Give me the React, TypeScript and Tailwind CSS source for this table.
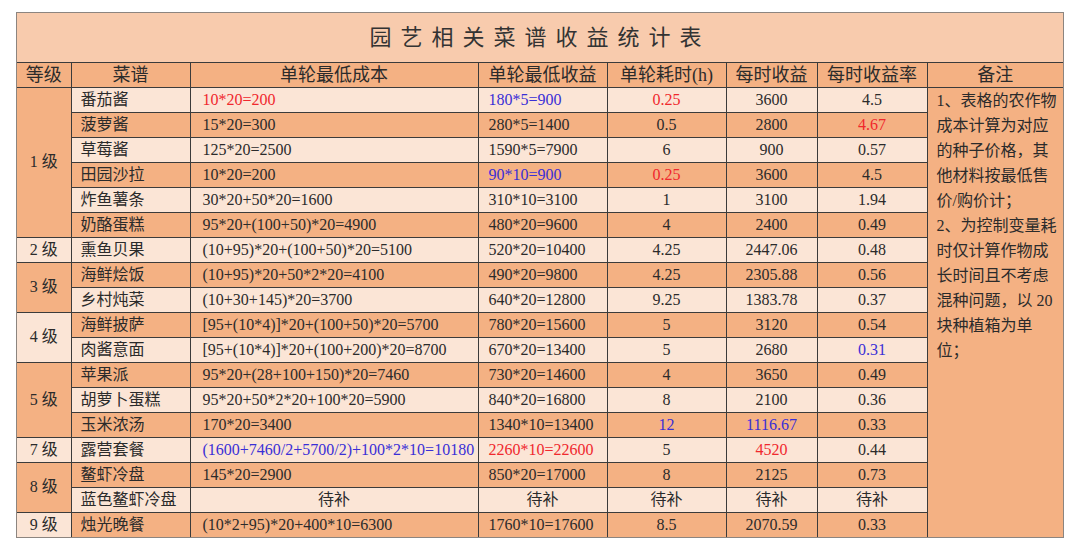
import { FC } from "react";

type Tone = "red" | "blue";

type Dish = {
  name: string;
  cost: string;
  income: string;
  time: string;
  hourly: string;
  rate: string;
  costTone?: Tone;
  incomeTone?: Tone;
  timeTone?: Tone;
  hourlyTone?: Tone;
  rateTone?: Tone;
  pending?: boolean;
};

type Group = {
  level: string;
  dishes: Dish[];
};

const groups: Group[] = [
  {
    level: "1 级",
    dishes: [
      { name: "番茄酱", cost: "10*20=200", income: "180*5=900", time: "0.25", hourly: "3600", rate: "4.5", costTone: "red", incomeTone: "blue", timeTone: "red" },
      { name: "菠萝酱", cost: "15*20=300", income: "280*5=1400", time: "0.5", hourly: "2800", rate: "4.67", rateTone: "red" },
      { name: "草莓酱", cost: "125*20=2500", income: "1590*5=7900", time: "6", hourly: "900", rate: "0.57" },
      { name: "田园沙拉", cost: "10*20=200", income: "90*10=900", time: "0.25", hourly: "3600", rate: "4.5", incomeTone: "blue", timeTone: "red" },
      { name: "炸鱼薯条", cost: "30*20+50*20=1600", income: "310*10=3100", time: "1", hourly: "3100", rate: "1.94" },
      { name: "奶酪蛋糕", cost: "95*20+(100+50)*20=4900", income: "480*20=9600", time: "4", hourly: "2400", rate: "0.49" },
    ],
  },
  {
    level: "2 级",
    dishes: [
      { name: "熏鱼贝果", cost: "(10+95)*20+(100+50)*20=5100", income: "520*20=10400", time: "4.25", hourly: "2447.06", rate: "0.48" },
    ],
  },
  {
    level: "3 级",
    dishes: [
      { name: "海鲜烩饭", cost: "(10+95)*20+50*2*20=4100", income: "490*20=9800", time: "4.25", hourly: "2305.88", rate: "0.56" },
      { name: "乡村炖菜", cost: "(10+30+145)*20=3700", income: "640*20=12800", time: "9.25", hourly: "1383.78", rate: "0.37" },
    ],
  },
  {
    level: "4 级",
    dishes: [
      { name: "海鲜披萨", cost: "[95+(10*4)]*20+(100+50)*20=5700", income: "780*20=15600", time: "5", hourly: "3120", rate: "0.54" },
      { name: "肉酱意面", cost: "[95+(10*4)]*20+(100+200)*20=8700", income: "670*20=13400", time: "5", hourly: "2680", rate: "0.31", rateTone: "blue" },
    ],
  },
  {
    level: "5 级",
    dishes: [
      { name: "苹果派", cost: "95*20+(28+100+150)*20=7460", income: "730*20=14600", time: "4", hourly: "3650", rate: "0.49" },
      { name: "胡萝卜蛋糕", cost: "95*20+50*2*20+100*20=5900", income: "840*20=16800", time: "8", hourly: "2100", rate: "0.36" },
      { name: "玉米浓汤", cost: "170*20=3400", income: "1340*10=13400", time: "12", hourly: "1116.67", rate: "0.33", timeTone: "blue", hourlyTone: "blue" },
    ],
  },
  {
    level: "7 级",
    dishes: [
      { name: "露营套餐", cost: "(1600+7460/2+5700/2)+100*2*10=10180", income: "2260*10=22600", time: "5", hourly: "4520", rate: "0.44", costTone: "blue", incomeTone: "red", hourlyTone: "red" },
    ],
  },
  {
    level: "8 级",
    dishes: [
      { name: "鳌虾冷盘", cost: "145*20=2900", income: "850*20=17000", time: "8", hourly: "2125", rate: "0.73" },
      { name: "蓝色鳌虾冷盘", cost: "待补", income: "待补", time: "待补", hourly: "待补", rate: "待补", pending: true },
    ],
  },
  {
    level: "9 级",
    dishes: [
      { name: "烛光晚餐", cost: "(10*2+95)*20+400*10=6300", income: "1760*10=17600", time: "8.5", hourly: "2070.59", rate: "0.33" },
    ],
  },
];

const notes = [
  "1、表格的农作物",
  "成本计算为对应",
  "的种子价格，其",
  "他材料按最低售",
  "价/购价计；",
  "2、为控制变量耗",
  "时仅计算作物成",
  "长时间且不考虑",
  "混种问题，以 20",
  "块种植箱为单",
  "位；",
];

const tone = (t?: Tone) =>
  t === "red" ? "text-[#f0282d]" : t === "blue" ? "text-[#3a2fd6]" : "";

const cell = "border border-[#3b3b3b] p-0";

export default function App() {
  let rowIndex = 0;

  return (
    <div className="h-[547px] w-[1080px] overflow-hidden bg-white pl-[16px] pt-[12px] font-['Liberation_Serif','Noto_Sans_CJK_SC',serif] text-[#2b2b2b]">
      <div className="w-[1048px] border border-[#8c8580]">
        <table className="w-[1046px] table-fixed border-collapse border-hidden">
          <colgroup>
            <col className="w-[54px]" />
            <col className="w-[119px]" />
            <col className="w-[288px]" />
            <col className="w-[129px]" />
            <col className="w-[119px]" />
            <col className="w-[91px]" />
            <col className="w-[110px]" />
            <col className="w-[136px]" />
          </colgroup>
          <tbody>
            <tr className="h-[49px] bg-[#f8cbad]">
              <td
                colSpan={8}
                className={`${cell} text-center text-[22px] tracking-[9px] text-[#333]`}
              >
                园艺相关菜谱收益统计表
              </td>
            </tr>
            <tr className="h-[25px] bg-[#f4b183] text-center text-[18px] leading-none">
              <td className={cell}>等级</td>
              <td className={cell}>菜谱</td>
              <td className={cell}>单轮最低成本</td>
              <td className={cell}>单轮最低收益</td>
              <td className={cell}>单轮耗时(h)</td>
              <td className={cell}>每时收益</td>
              <td className={cell}>每时收益率</td>
              <td className={cell}>备注</td>
            </tr>
            {groups.map((group, gi) =>
              group.dishes.map((dish, di) => {
                const light = rowIndex % 2 === 0;
                const first = rowIndex === 0;
                rowIndex++;
                return (
                  <tr
                    key={dish.name}
                    className={`h-[25px] text-[16px] leading-none ${
                      light ? "bg-[#fbe5d6]" : "bg-[#f4b183]"
                    }`}
                  >
                    {di === 0 && (
                      <td
                        rowSpan={group.dishes.length}
                        className={`${cell} text-center align-middle ${
                          gi % 2 === 0 ? "bg-[#f4b183]" : "bg-[#fbe5d6]"
                        }`}
                      >
                        {group.level}
                      </td>
                    )}
                    <td className={`${cell} pl-[9px]`}>{dish.name}</td>
                    <td
                      className={`${cell} ${
                        dish.pending ? "text-center" : "pl-[12px]"
                      } ${tone(dish.costTone)}`}
                    >
                      {dish.cost}
                    </td>
                    <td
                      className={`${cell} ${
                        dish.pending ? "text-center" : "pl-[10px]"
                      } ${tone(dish.incomeTone)}`}
                    >
                      {dish.income}
                    </td>
                    <td className={`${cell} text-center ${tone(dish.timeTone)}`}>
                      {dish.time}
                    </td>
                    <td className={`${cell} text-center ${tone(dish.hourlyTone)}`}>
                      {dish.hourly}
                    </td>
                    <td className={`${cell} text-center ${tone(dish.rateTone)}`}>
                      {dish.rate}
                    </td>
                    {first && (
                      <td
                        rowSpan={18}
                        className={`${cell} bg-[#f4b183] pl-[9px] align-top text-[16px] leading-[25px]`}
                      >
                        {notes.map((line) => (
                          <div key={line} className="whitespace-nowrap">
                            {line}
                          </div>
                        ))}
                      </td>
                    )}
                  </tr>
                );
              })
            )}
          </tbody>
        </table>
      </div>
    </div>
  );
}
